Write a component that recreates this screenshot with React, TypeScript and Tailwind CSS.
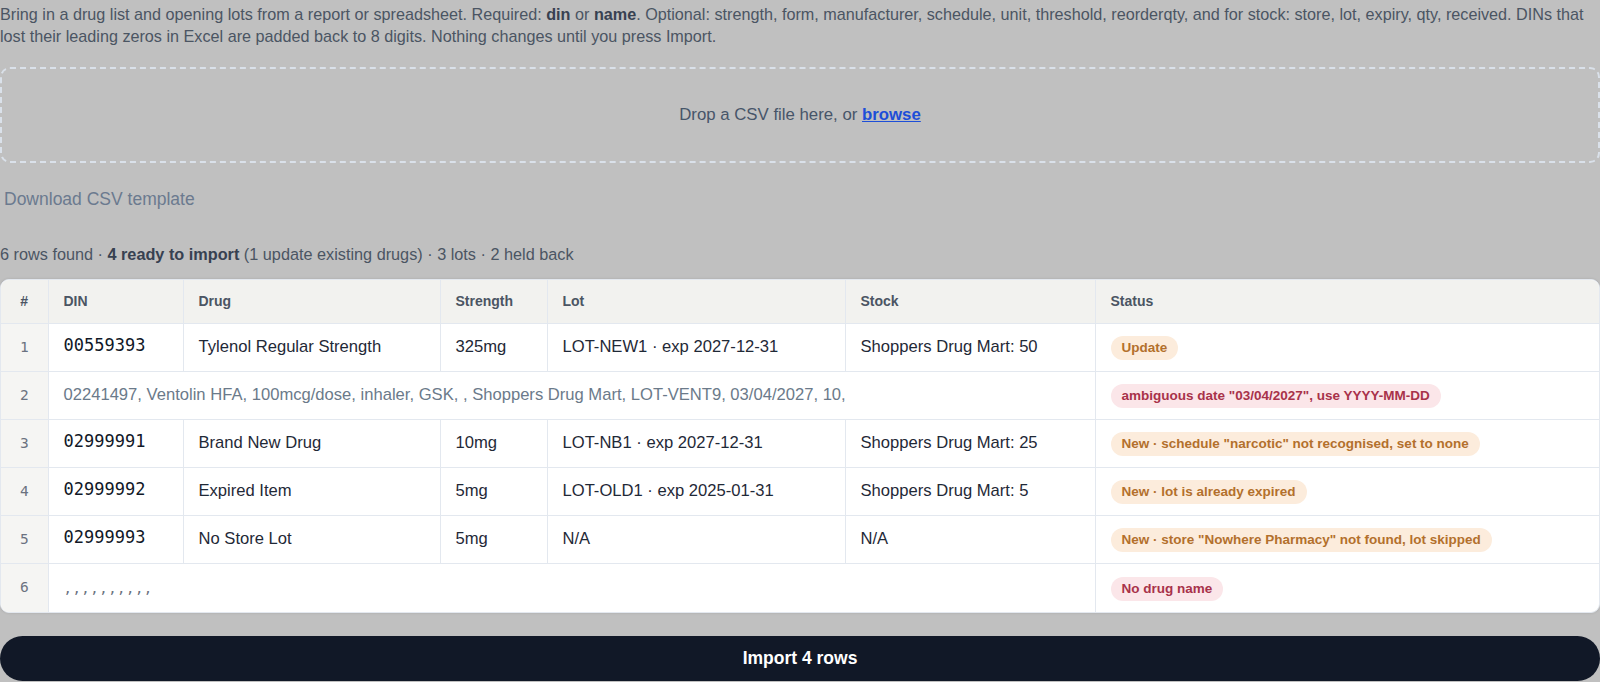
import React from "react";

type Tone = "amber" | "rose";

type Row = {
  n: number;
  din?: string;
  drug?: string;
  strength?: string;
  lot?: string;
  stock?: string;
  raw?: string;
  rawMono?: boolean;
  status: string;
  tone: Tone;
};

const rows: Row[] = [
  {
    n: 1,
    din: "00559393",
    drug: "Tylenol Regular Strength",
    strength: "325mg",
    lot: "LOT-NEW1 · exp 2027-12-31",
    stock: "Shoppers Drug Mart: 50",
    status: "Update",
    tone: "amber",
  },
  {
    n: 2,
    raw: "02241497, Ventolin HFA, 100mcg/dose, inhaler, GSK, , Shoppers Drug Mart, LOT-VENT9, 03/04/2027, 10,",
    status: 'ambiguous date "03/04/2027", use YYYY-MM-DD',
    tone: "rose",
  },
  {
    n: 3,
    din: "02999991",
    drug: "Brand New Drug",
    strength: "10mg",
    lot: "LOT-NB1 · exp 2027-12-31",
    stock: "Shoppers Drug Mart: 25",
    status: 'New · schedule "narcotic" not recognised, set to none',
    tone: "amber",
  },
  {
    n: 4,
    din: "02999992",
    drug: "Expired Item",
    strength: "5mg",
    lot: "LOT-OLD1 · exp 2025-01-31",
    stock: "Shoppers Drug Mart: 5",
    status: "New · lot is already expired",
    tone: "amber",
  },
  {
    n: 5,
    din: "02999993",
    drug: "No Store Lot",
    strength: "5mg",
    lot: "N/A",
    stock: "N/A",
    status: 'New · store "Nowhere Pharmacy" not found, lot skipped',
    tone: "amber",
  },
  {
    n: 6,
    raw: ",,,,,,,,,,",
    rawMono: true,
    status: "No drug name",
    tone: "rose",
  },
];

function Badge({ tone, children }: { tone: Tone; children: React.ReactNode }) {
  const cls =
    tone === "amber"
      ? "bg-[#fcecdc] text-[#b3702c]"
      : "bg-[#fbe6e9] text-[#a8324a]";
  return (
    <span
      className={`inline-block rounded-full px-[11px] py-[4px] text-[13.5px] font-bold leading-[16px] whitespace-nowrap ${cls}`}
    >
      {children}
    </span>
  );
}

const cell = "px-[15px] border-l border-[#e3e8ef] align-middle";

export default function App() {
  return (
    <div
      className="min-h-[682px] w-[1600px] bg-[#c0c0c0] text-[#4b5563]"
      style={{ fontFamily: '"Liberation Sans", Arial, sans-serif' }}
    >
      <p className="pt-[3px] text-[16.2px] leading-[22.4px] text-[#4b5563]">
        Bring in a drug list and opening lots from a report or spreadsheet. Required:{" "}
        <b className="text-[#374151]">din</b> or <b className="text-[#374151]">name</b>. Optional:
        strength, form, manufacturer, schedule, unit, threshold, reorderqty, and for stock: store, lot,
        expiry, qty, received. DINs that lost their leading zeros in Excel are padded back to 8 digits.
        Nothing changes until you press Import.
      </p>

      <div className="mt-[19px] flex h-[96px] items-center justify-center rounded-[10px] border-2 border-dashed border-[#dae1ea] text-[16.8px] text-[#475569]">
        <span>
          Drop a CSV file here, or{" "}
          <span className="font-bold text-[#1d4ed8] underline">browse</span>
        </span>
      </div>

      <div className="mt-[24px] flex">
        <button className="px-[4px] text-[17.5px] leading-[24px] text-[#6b7a8f]">
          Download CSV template
        </button>
      </div>

      <div className="mt-[31px] text-[16.25px] leading-[24px] text-[#4b5563]">
        6 rows found · <b className="text-[#374151]">4 ready to import</b> (1 update existing drugs) · 3
        lots · 2 held back
      </div>

      <div className="mt-[13px] overflow-hidden rounded-[9px] border border-[#e3e8ef] bg-white shadow-[0_0_3px_rgba(0,0,0,0.12)]">
        <table className="w-full table-fixed border-collapse">
          <colgroup>
            <col className="w-[47px]" />
            <col className="w-[135px]" />
            <col className="w-[257px]" />
            <col className="w-[107px]" />
            <col className="w-[298px]" />
            <col className="w-[250px]" />
            <col />
          </colgroup>
          <thead>
            <tr className="h-[44px] bg-[#f2f2ef] text-left text-[14px] font-bold text-[#4b5563]">
              <th className="text-center">#</th>
              <th className={cell}>DIN</th>
              <th className={cell}>Drug</th>
              <th className={cell}>Strength</th>
              <th className={cell}>Lot</th>
              <th className={cell}>Stock</th>
              <th className={cell}>Status</th>
            </tr>
          </thead>
          <tbody>
            {rows.map((r) => (
              <tr key={r.n} className="h-[48px] border-t border-[#e3e8ef] text-[16.6px] text-[#1f2937]">
                <td
                  className="bg-[#f5f5f3] text-center text-[14.5px] text-[#6b7280]"
                  style={{ fontFamily: '"DejaVu Sans Mono", monospace' }}
                >
                  {r.n}
                </td>
                {r.raw !== undefined ? (
                  <td colSpan={5} className={`${cell} whitespace-nowrap text-[#6b7a8a]`}>
                    {r.rawMono ? (
                      <span
                        className="text-[14px] tracking-[0.5px] text-[#6b7280]"
                        style={{ fontFamily: '"DejaVu Sans Mono", monospace' }}
                      >
                        {r.raw}
                      </span>
                    ) : (
                      r.raw
                    )}
                  </td>
                ) : (
                  <>
                    <td
                      className={`${cell} text-[17px] text-[#111827]`}
                      style={{ fontFamily: '"DejaVu Sans Mono", monospace' }}
                    >
                      <span className="relative -top-[2px]">{r.din}</span>
                    </td>
                    <td className={cell}>{r.drug}</td>
                    <td className={cell}>{r.strength}</td>
                    <td className={cell}>{r.lot}</td>
                    <td className={cell}>{r.stock}</td>
                  </>
                )}
                <td className={cell}>
                  <Badge tone={r.tone}>{r.status}</Badge>
                </td>
              </tr>
            ))}
          </tbody>
        </table>
      </div>

      <button className="mt-[23px] flex h-[45px] w-full items-center justify-center rounded-full bg-[#111827] text-[17.5px] font-bold text-white">
        Import 4 rows
      </button>
    </div>
  );
}
